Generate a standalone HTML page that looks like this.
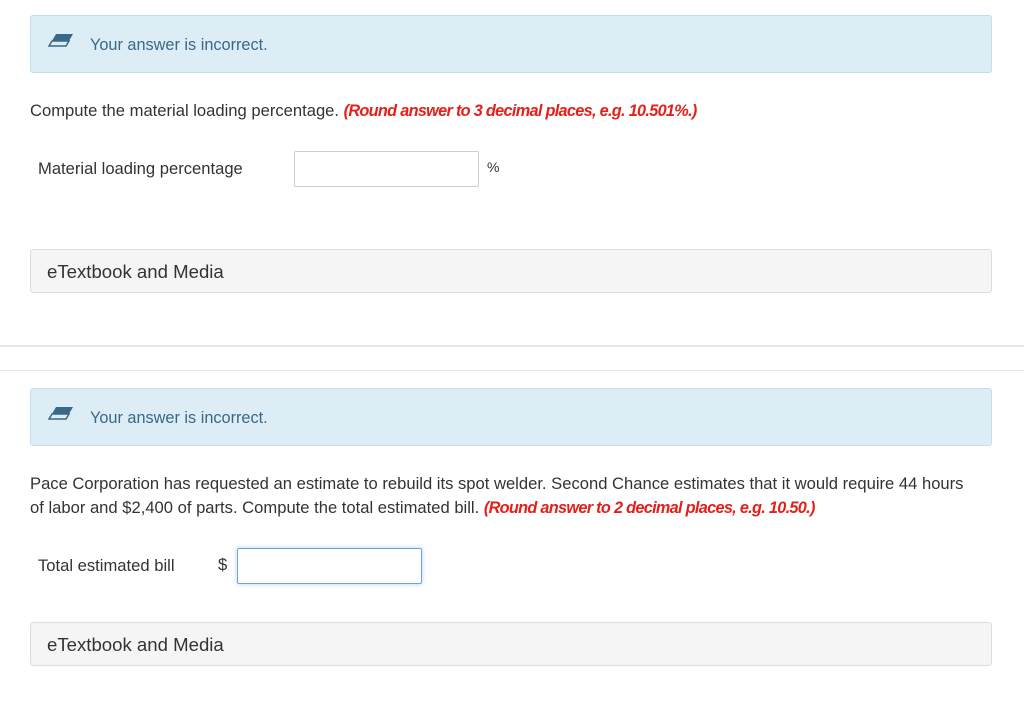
<!DOCTYPE html>
<html><head><style>
body{margin:0;width:1024px;height:703px;background:#fff;font-family:"Liberation Sans",sans-serif;color:#333;position:relative;overflow:hidden}
.a{position:absolute}
.alert{left:30px;width:962px;height:58px;background:#dcedf6;border:1px solid #bfe1ec;border-radius:3px;box-sizing:border-box}
.alert span{position:absolute;left:59px;top:20px;font-size:16.3px;color:#3a6887}
.alert svg{position:absolute;left:17px;top:17px}
.t{font-size:16.6px;color:#333}
.red{color:#e4201a;font-weight:bold;font-style:italic;letter-spacing:-0.7px;font-size:16.3px}
.box{left:30px;width:962px;height:44px;background:#f5f5f5;border:1px solid #ddd;border-radius:3px;box-sizing:border-box}
.box span{position:absolute;left:16px;top:11px;font-size:18.6px;color:#333}
.inp{background:#fff;border:1px solid #ccc;box-sizing:border-box;border-radius:2px}
</style></head><body>
<div class="a alert" style="top:15px"><svg width="26" height="14" viewBox="0 0 26 14"><path d="M8 1H25L18 13H1Z" fill="#3a6887"/><path d="M4 8H21L18 13H1Z" fill="#dcedf6" stroke="#3a6887" stroke-width="1.5"/></svg><span>Your answer is incorrect.</span></div>
<div class="a t" style="left:30px;top:101px">Compute the material loading percentage. <span class="red">(Round answer to 3 decimal places, e.g. 10.501%.)</span></div>
<div class="a t" style="left:38px;top:159px">Material loading percentage</div>
<div class="a inp" style="left:294px;top:151px;width:185px;height:36px"></div>
<div class="a t" style="left:487px;top:159px;font-size:14px">%</div>
<div class="a box" style="top:249px"><span>eTextbook and Media</span></div>
<div class="a" style="left:0;top:345px;width:1024px;height:2px;background:#e6e6e6"></div>
<div class="a" style="left:0;top:370px;width:1024px;height:1px;background:#e3e3e3"></div>
<div class="a alert" style="top:388px"><svg width="26" height="14" viewBox="0 0 26 14"><path d="M8 1H25L18 13H1Z" fill="#3a6887"/><path d="M4 8H21L18 13H1Z" fill="#dcedf6" stroke="#3a6887" stroke-width="1.5"/></svg><span>Your answer is incorrect.</span></div>
<div class="a t" style="left:30px;top:472px;width:940px;line-height:24px">Pace Corporation has requested an estimate to rebuild its spot welder. Second Chance estimates that it would require 44 hours of labor and $2,400 of parts. Compute the total estimated bill. <span class="red">(Round answer to 2 decimal places, e.g. 10.50.)</span></div>
<div class="a t" style="left:38px;top:556px">Total estimated bill</div>
<div class="a t" style="left:218px;top:555px">$</div>
<div class="a inp" style="left:237px;top:548px;width:185px;height:36px;border-color:#6aa5e0;box-shadow:0 0 4px rgba(100,160,230,.5)"></div>
<div class="a box" style="top:622px"><span>eTextbook and Media</span></div>
</body></html>
